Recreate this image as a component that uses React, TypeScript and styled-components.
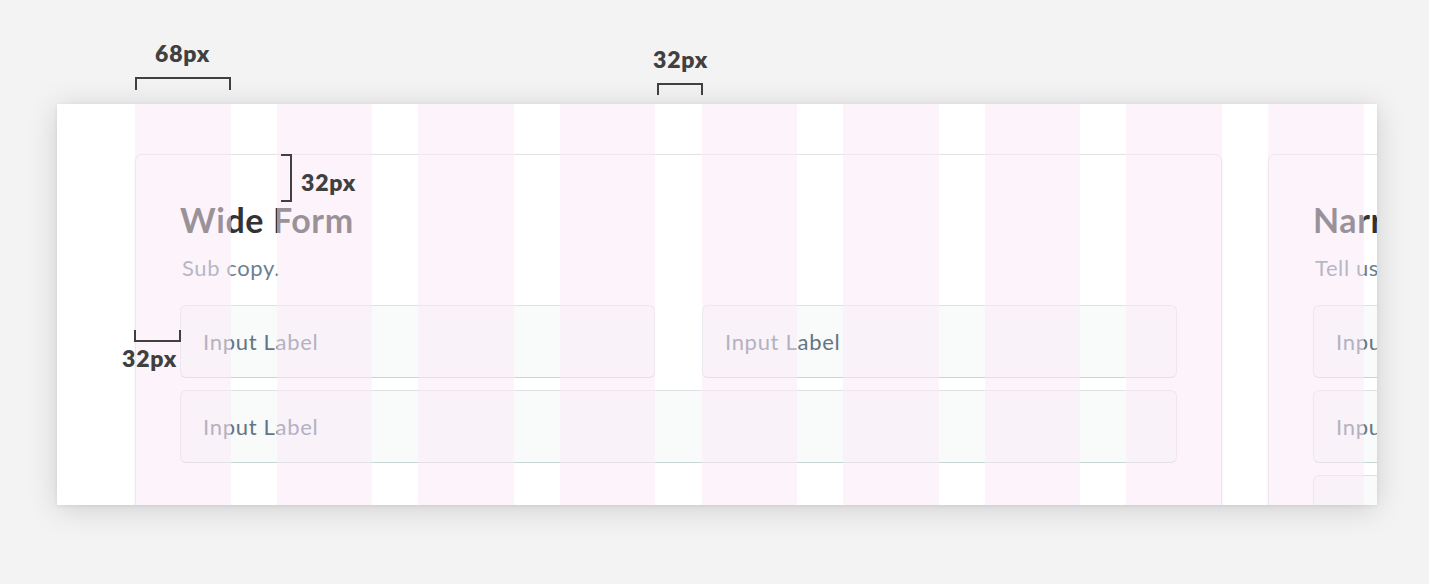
import React from "react";
import styled, { createGlobalStyle } from "styled-components";

const COL = 95.5;
const GUT = 46.125;
const span = (n: number) => n * COL + (n - 1) * GUT;

const Global = createGlobalStyle`
  html, body { margin: 0; padding: 0; background: #f3f3f3; }
  body { font-family: Lato, "Open Sans", sans-serif; }
`;

const Stage = styled.div`
  position: relative;
  width: 1429px;
  height: 584px;
  padding: 104px 0 0 57px;
  box-sizing: border-box;
`;

const Panel = styled.div`
  position: relative;
  width: 1320px;
  height: 401px;
  background: #ffffff;
  overflow: hidden;
  box-shadow: 0 4px 28px rgba(0, 0, 0, 0.15), 0 1px 4px rgba(0, 0, 0, 0.07);
`;

const CardRow = styled.div`
  display: flex;
  gap: ${GUT}px;
  padding: 50px 0 0 78px;
  width: max-content;
`;

const Card = styled.section<{ $cols: number }>`
  flex: none;
  width: ${(p) => span(p.$cols)}px;
  height: 400px;
  box-sizing: border-box;
  padding: 45px 44px 0 44px;
  border: 1px solid #e3e1e4;
  border-radius: 7px;
  box-shadow: 0 1px 3px rgba(0, 0, 0, 0.07);
  background: #fff;
`;

const Title = styled.h2`
  margin: 0;
  font-family: Lato, sans-serif;
  font-weight: 700;
  font-size: 34px;
  line-height: 1.2;
  color: #323232;
  letter-spacing: 0.6px;
`;

const Sub = styled.p`
  margin: 14px 0 0 2px;
  font-family: Lato, sans-serif;
  font-size: 22px;
  line-height: 1.2;
  color: #6b7f8f;
  letter-spacing: 0.6px;
`;

const Fields = styled.div<{ $cols: number }>`
  margin-top: 24px;
  display: grid;
  grid-template-columns: repeat(${(p) => p.$cols}, 1fr);
  column-gap: 47px;
  row-gap: 12px;
`;

const Field = styled.div<{ $wide?: boolean }>`
  grid-column: ${(p) => (p.$wide ? "1 / -1" : "auto")};
  height: 73px;
  box-sizing: border-box;
  display: flex;
  align-items: center;
  padding: 0 0 0 22px;
  background: #f9fafa;
  border: 1px solid #dde3e5;
  border-bottom-color: #c9d6d8;
  border-radius: 6px;
  font-family: Lato, sans-serif;
  font-size: 22px;
  letter-spacing: 0.7px;
  color: #627584;
`;

const GridOverlay = styled.div`
  position: absolute;
  inset: 0;
  pointer-events: none;
  display: grid;
  grid-template-columns: repeat(9, ${COL}px);
  column-gap: ${GUT}px;
  padding-left: 78px;
`;

const Column = styled.div`
  background: rgba(251, 234, 247, 0.52);
`;

const Bracket = styled.div<{ $open: "top" | "bottom" | "left" }>`
  position: absolute;
  box-sizing: border-box;
  border: 2px solid #404040;
  ${(p) => `border-${p.$open}: none;`}
`;

const Measure = styled.span`
  position: absolute;
  font-family: Lato, sans-serif;
  font-weight: 800;
  font-size: 23px;
  letter-spacing: 0.8px;
  line-height: 1;
  color: #404040;
  white-space: nowrap;
`;

export default function App() {
  return (
    <>
      <Global />
      <Stage>
        <Panel>
          <CardRow>
            <Card $cols={8}>
              <Title>Wide Form</Title>
              <Sub>Sub copy.</Sub>
              <Fields $cols={2}>
                <Field>Input Label</Field>
                <Field>Input Label</Field>
                <Field $wide>Input Label</Field>
              </Fields>
            </Card>
            <Card $cols={4}>
              <Title>Narrow Form</Title>
              <Sub>Tell us about yourself.</Sub>
              <Fields $cols={1}>
                <Field>Input Label</Field>
                <Field>Input Label</Field>
                <Field>Input Label</Field>
              </Fields>
            </Card>
          </CardRow>
          <GridOverlay>
            {Array.from({ length: 9 }).map((_, i) => (
              <Column key={i} />
            ))}
          </GridOverlay>
        </Panel>

        <Bracket $open="bottom" style={{ left: 135, top: 77, width: 96, height: 13 }} />
        <Measure style={{ left: 155, top: 42 }}>68px</Measure>

        <Bracket $open="bottom" style={{ left: 657, top: 83, width: 46, height: 12 }} />
        <Measure style={{ left: 653, top: 48 }}>32px</Measure>

        <Bracket $open="left" style={{ left: 281, top: 154, width: 11, height: 48 }} />
        <Measure style={{ left: 301, top: 171 }}>32px</Measure>

        <Bracket $open="top" style={{ left: 134, top: 330, width: 47, height: 12 }} />
        <Measure style={{ left: 122, top: 347 }}>32px</Measure>
      </Stage>
    </>
  );
}
